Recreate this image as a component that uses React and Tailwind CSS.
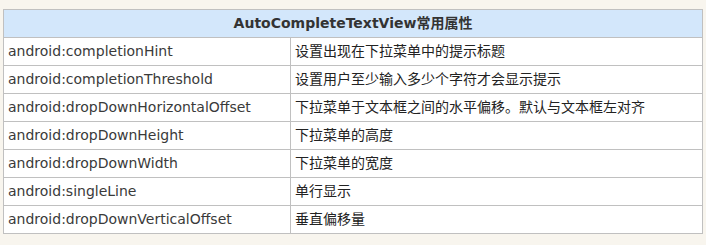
import React from "react";

const rows = [
  ["android:completionHint", "设置出现在下拉菜单中的提示标题"],
  ["android:completionThreshold", "设置用户至少输入多少个字符才会显示提示"],
  ["android:dropDownHorizontalOffset", "下拉菜单于文本框之间的水平偏移。默认与文本框左对齐"],
  ["android:dropDownHeight", "下拉菜单的高度"],
  ["android:dropDownWidth", "下拉菜单的宽度"],
  ["android:singleLine", "单行显示"],
  ["android:dropDownVerticalOffset", "垂直偏移量"],
];

const App = () => {
  return (
    <div
      className="w-[706px] h-[245px] bg-[#f8f5ee] pt-[9px] pl-[3px]"
      style={{ fontFamily: '"DejaVu Sans", "Noto Sans CJK SC", sans-serif' }}
    >
      <table className="w-[700px] border-collapse text-[14px] text-[#333]">
        <thead>
          <tr className="h-[28px] bg-[#d3e7fb]">
            <th colSpan={2} className="border border-[#c0c0c0] font-bold text-center text-[#333]">
              AutoCompleteTextView常用属性
            </th>
          </tr>
        </thead>
        <tbody>
          {rows.map(([attr, desc]) => (
            <tr key={attr} className="h-[28px] bg-white">
              <td className="w-[287px] border border-[#c0c0c0] px-[4px] text-[#3a3a3a]">{attr}</td>
              <td className="border border-[#c0c0c0] px-[4px] text-[#222]">{desc}</td>
            </tr>
          ))}
        </tbody>
      </table>
    </div>
  );
};

export default App;
